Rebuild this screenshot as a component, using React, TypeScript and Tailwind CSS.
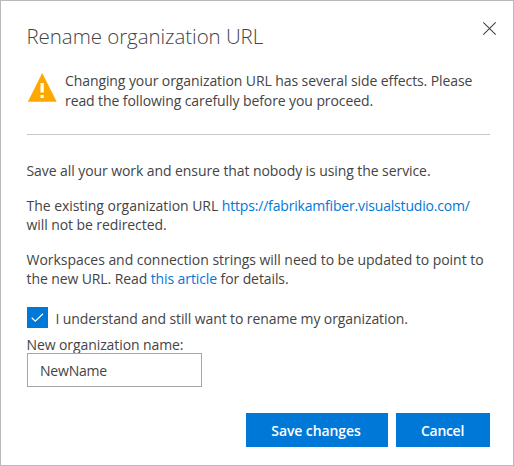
function WarningIcon() {
  return (
    <svg className="mt-[9px] h-[30px] w-[30px] shrink-0" viewBox="0 0 30 30">
      <path d="M15.2 1 L29.7 29.8 H0.9 Z" fill="#fca800" />
      <path d="M13.5 11h3.3v9.5h-3.3zM13.5 23h3.3v3h-3.3z" fill="#fff" />
    </svg>
  );
}

export default function App() {
  return (
    <div className="flex h-[466px] w-[514px] flex-col border border-[#bababa] bg-white pr-[23px] pl-[25.5px] font-['Open_Sans',sans-serif] text-[14px] leading-[19.5px] tracking-[-0.08px] whitespace-nowrap text-[#444444]">
      <header className="flex h-[62px] shrink-0 justify-between">
        <h1 className="mt-[22px] text-[20.5px] leading-[26px] font-light tracking-[-0.06px] text-[#444444]">
          Rename organization URL
        </h1>
        <button aria-label="Close" className="mt-[20px] mr-[-7px] h-[15px] w-[15px]">
          <svg viewBox="0 0 15 15" className="h-[15px] w-[15px]" stroke="#444" strokeWidth="1.1">
            <path d="M1.3 1.3 L13.7 13.7 M13.7 1.3 L1.3 13.7" />
          </svg>
        </button>
      </header>

      <section className="flex h-[72px] shrink-0 gap-[8.5px] border-b border-[#c8c8c8]">
        <WarningIcon />
        <div className="mt-[8px]">
          <p className="tracking-[-0.09px]">Changing your organization URL has several side effects. Please</p>
          <p className="tracking-[-0.09px]">read the following carefully before you proceed.</p>
        </div>
      </section>

      <section className="mt-[26px] flex shrink-0 flex-col gap-[15px]">
        <p>Save all your work and ensure that nobody is using the service.</p>
        <div>
          <p className="tracking-[-0.04px]">
            The existing organization URL{" "}
            <a className="tracking-[-0.18px] text-[#0078d7]">https://fabrikamfiber.visualstudio.com/</a>
          </p>
          <p>will not be redirected.</p>
        </div>
        <div>
          <p className="tracking-[-0.04px]">Workspaces and connection strings will need to be updated to point to</p>
          <p className="tracking-[-0.1px]">
            the new URL. Read <a className="text-[#0078d7]">this article</a> for details.
          </p>
        </div>
      </section>

      <label className="mt-[18px] flex h-[21px] shrink-0 items-center gap-[8px] tracking-[-0.1px]">
        <span className="flex h-[21px] w-[21px] items-center justify-center bg-[#0078d7]">
          <svg className="h-[21px] w-[21px]" viewBox="0 0 21 21" fill="none" stroke="#fff" strokeWidth="1.2">
            <path d="M4.7 10.8 L8.3 14.2 L16 6.7" />
          </svg>
        </span>
        <span className="mt-[3px]">I understand and still want to rename my organization.</span>
      </label>

      <label className="mt-[7px] h-[18px] shrink-0 tracking-[-0.09px]">New organization name:</label>
      <div className="flex h-[34px] w-[175px] shrink-0 items-center border border-[#a6a6a6] pt-[2px] pl-[12.5px] tracking-[-0.2px]">
        NewName
      </div>

      <footer className="mt-[26px] flex shrink-0 justify-end gap-[8px] font-semibold text-white">
        <button className="h-[34px] w-[142px] bg-[#0078d7] pt-[2px] pr-[2px] tracking-[-0.1px]">Save changes</button>
        <button className="h-[34px] w-[94px] bg-[#0078d7] pt-[2px] pr-[1px] tracking-[-0.3px]">Cancel</button>
      </footer>
    </div>
  );
}
